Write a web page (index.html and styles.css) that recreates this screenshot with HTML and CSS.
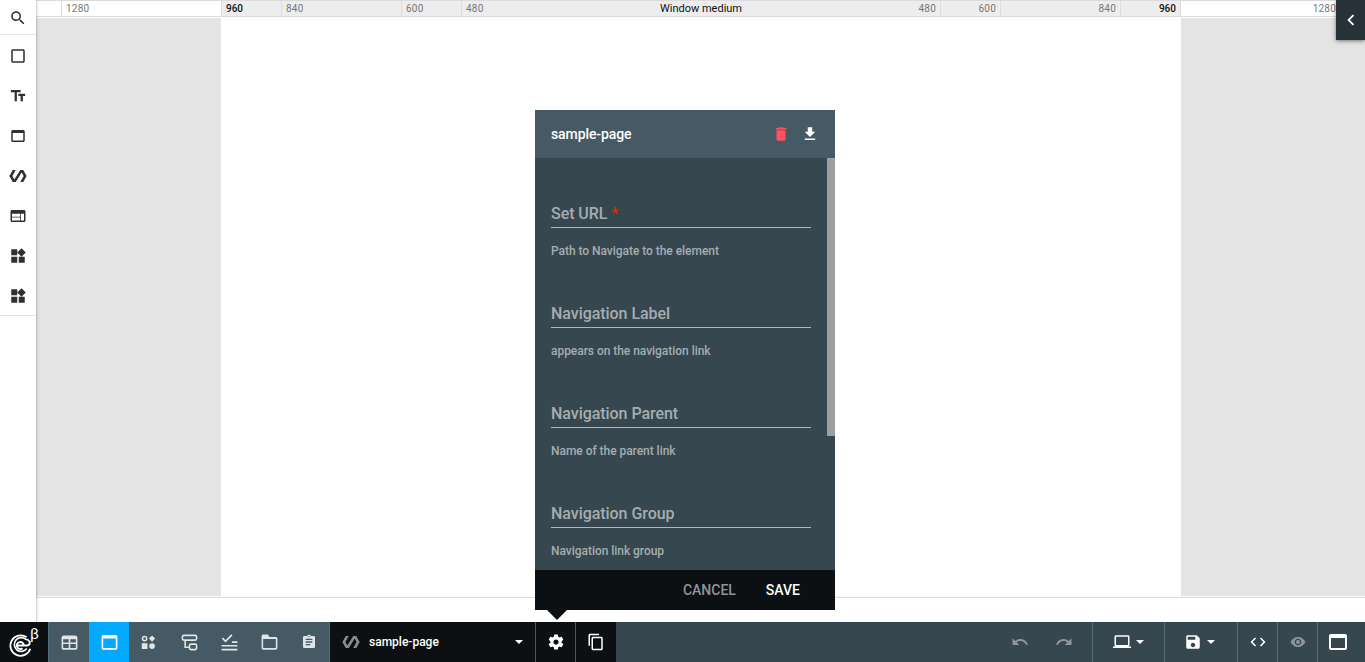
FILE: index.html
```html
<!DOCTYPE html>
<html lang="en">
<head>
<meta charset="utf-8">
<title>sample-page</title>
<link rel="stylesheet" href="styles.css">
</head>
<body>
<div class="app">
  <div class="workspace">
    <aside class="sidebar">
      <button class="tool search"><svg viewBox="0 0 24 24"><path d="M15.5 14h-.79l-.28-.27C15.41 12.59 16 11.11 16 9.5 16 5.91 13.09 3 9.5 3S3 5.91 3 9.5 5.91 16 9.5 16c1.61 0 3.09-.59 4.23-1.57l.27.28v.79l5 4.99L20.49 19l-4.99-5zm-6 0C7.01 14 5 11.99 5 9.5S7.01 5 9.5 5 14 7.01 14 9.5 11.99 14 9.5 14z"/></svg></button>
      <div class="tools">
        <button class="tool"><svg viewBox="0 0 24 24"><path d="M19 5v14H5V5h14m0-2H5c-1.1 0-2 .9-2 2v14c0 1.1.9 2 2 2h14c1.1 0 2-.9 2-2V5c0-1.1-.9-2-2-2z"/></svg></button>
        <button class="tool"><svg viewBox="0 0 24 24"><path d="M2.5 4v3h5v12h3V7h5V4h-13zm19 5h-9v3h3v7h3v-7h3V9z"/></svg></button>
        <button class="tool"><svg viewBox="0 0 24 24"><path d="M19 4H5c-1.11 0-2 .9-2 2v12c0 1.1.89 2 2 2h14c1.1 0 2-.9 2-2V6c0-1.1-.89-2-2-2zm0 14H5V8h14v10z"/></svg></button>
        <button class="tool"><svg viewBox="0 0 24 24"><path d="M19 4h-4L7.11 16.63 4.5 12 9 4H5L.5 12 5 20h4l7.89-12.63L19.5 12 15 20h4l4.5-8z"/></svg></button>
        <button class="tool"><svg viewBox="0 0 24 24"><path d="M20 4H4c-1.1 0-1.99.9-1.99 2L2 18c0 1.1.9 2 2 2h16c1.1 0 2-.9 2-2V6c0-1.1-.9-2-2-2zm-5 14H4v-4h11v4zm0-5H4V9h11v4zm5 5h-4V9h4v9z"/></svg></button>
        <button class="tool"><svg viewBox="0 0 24 24"><path d="M13 13v8h8v-8h-8zM3 21h8v-8H3v8zM3 3v8h8V3H3zm13.66-1.31L11 7.34 16.66 13l5.66-5.66-5.66-5.65z"/></svg></button>
        <button class="tool"><svg viewBox="0 0 24 24"><path d="M13 13v8h8v-8h-8zM3 21h8v-8H3v8zM3 3v8h8V3H3zm13.66-1.31L11 7.34 16.66 13l5.66-5.66-5.66-5.65z"/></svg></button>
      </div>
    </aside>
    <main class="stage">
      <div class="ruler">
        <div class="mark edge"></div>
        <div class="mark left w160">1280</div>
        <div class="mark left w60 inside current">960</div>
        <div class="mark left w120 inside">840</div>
        <div class="mark left w60 inside">600</div>
        <div class="mark middle inside"><span>480</span><span class="window">Window medium</span><span>480</span></div>
        <div class="mark right w60 inside">600</div>
        <div class="mark right w120 inside">840</div>
        <div class="mark right w60 inside current">960</div>
        <div class="mark right w160">1280</div>
      </div>
      <div class="viewport"><div class="canvas"></div></div>
      <button class="drawer"><svg viewBox="0 0 24 24"><path d="M15.41 7.41L14 6l-6 6 6 6 1.41-1.41L10.83 12z"/></svg></button>
    </main>
  </div>

  <footer class="bar">
    <div class="logo"><svg viewBox="0 0 48 40"><g fill="none" stroke="#fff"><path stroke-width="1.8" d="M26.6 15.300A10.200 10.200 0 1 0 30.300 26.800"/><path stroke-width="1.700" d="M30.300 20.300C29 18.500 27.500 17.200 25.500 17.100A6.900 6.900 0 1 0 26.800 26.600"/><path stroke-width="1.900" d="M16.800 23.500H27C29.500 23.400 30 21.500 29.500 20M23.800 23.500A3.500 3.500 0 1 0 22.500 26.200"/></g></svg><span>β</span></div>
    <nav class="tabs">
      <button><svg viewBox="0 0 24 24"><path fill-rule="evenodd" d="M5 3h14a3 3 0 0 1 3 3v13a2 2 0 0 1-2 2H4a2 2 0 0 1-2-2V6a3 3 0 0 1 3-3zM4 8v4h7V8zm9 0v4h7V8zM4 14v5h7v-5zm9 0v5h7v-5z"/></svg></button>
      <button class="active"><svg viewBox="0 0 24 24"><path fill-rule="evenodd" d="M4 2.5h16a2 2 0 0 1 2 2V19a2 2 0 0 1-2 2H4a2 2 0 0 1-2-2V4.500a2 2 0 0 1 2-2zM4 7v12h16V7z"/></svg></button>
      <button class="shapes"><svg viewBox="0 0 24 24"><circle cx="6.500" cy="6.500" r="3" fill="none" stroke="currentColor" stroke-width="2"/><path d="M17 2.200l4.300 4.300-4.300 4.300-4.300-4.300zM2.500 13h8v8h-8z"/><circle cx="17" cy="17" r="4"/></svg></button>
      <button><svg viewBox="0 0 24 24"><g fill="none" stroke="currentColor" stroke-width="2"><rect x="3" y="3" width="18" height="6" rx="2"/><path d="M6.500 9v9h6"/><rect x="12" y="14" width="9" height="7" rx="2"/></g></svg></button>
      <button><svg viewBox="0 0 24 24"><path d="M2 15h20v2H2zm0 5h20v2H2zM15 10.500h7v2h-7z"/><path d="M3 6.500l4 4 8-8" fill="none" stroke="currentColor" stroke-width="2.200"/></svg></button>
      <button><svg viewBox="0 0 24 24"><path d="M20 5h-8l-2-3H4c-1.100 0-2 .9-2 2v15c0 1.100.9 2 2 2h16c1.100 0 2-.9 2-2V7c0-1.100-.9-2-2-2zm0 14H4V7.500h16V19z"/></svg></button>
      <button class="notes"><svg viewBox="0 0 24 24"><path d="M19 3h-4.180C14.400 1.840 13.300 1 12 1s-2.400.84-2.820 2H5c-1.100 0-2 .9-2 2v14c0 1.100.9 2 2 2h14c1.100 0 2-.9 2-2V5c0-1.100-.9-2-2-2zm-7 0c.55 0 1 .45 1 1s-.45 1-1 1-1-.45-1-1 .45-1 1-1zm2 14H7v-2h7v2zm3-4H7v-2h10v2zm0-4H7V7h10v2z"/></svg></button>
    </nav>
    <button class="picker"><svg class="mute" viewBox="0 0 24 24"><path d="M19 4h-4L7.110 16.630 4.500 12 9 4H5L.5 12 5 20h4l7.890-12.630L19.500 12 15 20h4l4.500-8z"/></svg><span>sample-page</span><i class="caret"></i></button>
    <button class="dark"><svg viewBox="0 0 24 24"><path d="M19.430 12.980c.04-.32.070-.64.070-.98s-.030-.66-.070-.98l2.110-1.650c.19-.15.240-.42.120-.64l-2-3.460c-.12-.22-.39-.3-.61-.22l-2.490 1c-.52-.4-1.080-.73-1.690-.98l-.38-2.650C14.460 2.180 14.250 2 14 2h-4c-.25 0-.46.18-.49.42l-.38 2.650c-.61.25-1.170.59-1.690.98l-2.490-1c-.23-.09-.49 0-.61.22l-2 3.460c-.13.22-.07.490.12.640l2.110 1.650c-.04.320-.07.650-.07.980s.030.660.070.980l-2.110 1.650c-.19.150-.24.420-.12.640l2 3.460c.12.220.390.300.610.220l2.490-1c.52.400 1.080.730 1.690.980l.380 2.650c.030.240.240.420.490.420h4c.250 0 .460-.180.490-.420l.380-2.650c.610-.250 1.170-.590 1.690-.980l2.490 1c.230.090.490 0 .610-.220l2-3.460c.120-.220.070-.490-.120-.640l-2.110-1.650zM12 15.500c-1.930 0-3.500-1.570-3.500-3.500s1.570-3.500 3.500-3.500 3.500 1.570 3.500 3.500-1.570 3.500-3.500 3.500z"/></svg></button>
    <button class="dark copy"><svg viewBox="0 0 24 24"><path d="M16 1H4c-1.100 0-2 .9-2 2v14h2V3h12V1zm3 4H8c-1.100 0-2 .9-2 2v14c0 1.100.9 2 2 2h11c1.100 0 2-.9 2-2V7c0-1.100-.9-2-2-2zm0 16H8V7h11v14z"/></svg></button>
    <div class="actions">
      <div class="history">
        <button><svg viewBox="0 0 24 24"><path d="M12.500 8c-2.650 0-5.050.99-6.900 2.600L2 7v9h9l-3.620-3.620c1.390-1.160 3.160-1.880 5.120-1.880 3.540 0 6.550 2.310 7.600 5.500l2.370-.78C21.080 11.030 17.150 8 12.500 8z"/></svg></button>
        <button><svg viewBox="0 0 24 24"><path d="M18.400 10.600C16.550 8.990 14.150 8 11.500 8c-4.650 0-8.580 3.030-9.960 7.220L3.900 16c1.050-3.190 4.050-5.500 7.600-5.500 1.950 0 3.730.72 5.120 1.880L13 16h9V7l-3.600 3.600z"/></svg></button>
      </div>
      <button class="action device"><svg viewBox="0 0 24 24"><path d="M20 18c1.100 0 1.990-.9 1.990-2L22 5c0-1.100-.9-2-2-2H4c-1.100 0-2 .9-2 2v11c0 1.100.9 2 2 2H0v2h24v-2h-4zM4 5h16v11H4V5z"/></svg><i class="caret"></i></button>
      <button class="action save-menu"><svg viewBox="0 0 24 24"><path d="M17 3H5c-1.110 0-2 .9-2 2v14c0 1.100.89 2 2 2h14c1.100 0 2-.9 2-2V7l-4-4zm-5 16c-1.660 0-3-1.340-3-3s1.340-3 3-3 3 1.340 3 3-1.340 3-3 3zm3-10H5V5h10v4z"/></svg><i class="caret"></i></button>
      <button class="action"><svg viewBox="0 0 24 24"><path d="M9.400 16.600L4.800 12l4.600-4.600L8 6l-6 6 6 6 1.400-1.400zm5.200 0l4.600-4.600-4.600-4.600L16 6l6 6-6 6-1.400-1.400z"/></svg></button>
      <button class="action view"><svg viewBox="0 0 24 24"><path d="M12 4.500C7 4.500 2.730 7.610 1 12c1.730 4.390 6 7.500 11 7.500s9.270-3.110 11-7.500c-1.730-4.390-6-7.500-11-7.500zM12 17c-2.760 0-5-2.240-5-5s2.240-5 5-5 5 2.240 5 5-2.240 5-5 5zm0-8c-1.660 0-3 1.340-3 3s1.340 3 3 3 3-1.340 3-3-1.340-3-3-3z"/></svg></button>
      <button class="action last"><svg viewBox="0 0 24 24"><path d="M19 4H5c-1.110 0-2 .9-2 2v12c0 1.100.89 2 2 2h14c1.100 0 2-.9 2-2V6c0-1.100-.89-2-2-2zm0 14H5V8h14v10z"/></svg></button>
    </div>
  </footer>

  <section class="dialog">
    <header class="dialog-head"><h1>sample-page</h1>
      <svg class="trash" viewBox="0 0 24 24"><path d="M6 19c0 1.100.9 2 2 2h8c1.100 0 2-.9 2-2V7H6v12zM19 4h-3.500l-1-1h-5l-1 1H5v2h14V4z"/></svg>
      <svg viewBox="0 0 24 24"><path d="M19 9h-4V3H9v6H5l7 7 7-7zM5 18v2h14v-2H5z"/></svg>
    </header>
    <div class="dialog-body">
      <div class="fields">
        <div class="field"><label>Set URL <b>*</b></label><p>Path to Navigate to the element</p></div>
        <div class="field"><label>Navigation Label</label><p>appears on the navigation link</p></div>
        <div class="field"><label>Navigation Parent</label><p>Name of the parent link</p></div>
        <div class="field"><label>Navigation Group</label><p>Navigation link group</p></div>
      </div>
      <div class="scroll"><div class="thumb"></div></div>
    </div>
    <div class="dialog-foot"><button>CANCEL</button><button class="save">SAVE</button></div>
  </section>
</div>
</body>
</html>
```
FILE: styles.css
```css
* { box-sizing: border-box; }
body { margin: 0; font-family: Roboto, "Liberation Sans", sans-serif; overflow: hidden; }
button { border: 0; padding: 0; margin: 0; background: none; font: inherit; color: inherit; display: flex; align-items: center; justify-content: center; }
svg { display: block; width: 18px; height: 18px; fill: currentColor; flex: none; }
.app { position: relative; width: 1365px; height: 662px; display: flex; flex-direction: column; }
.workspace { flex: 1; display: flex; min-height: 0; }

.sidebar { width: 36px; background: #fff; color: #303030; box-shadow: 0 0 3px rgba(0,0,0,.4); z-index: 1; }
.tool { width: 36px; height: 40px; }
.search { height: 35px; padding-top: 1px; border-bottom: 1px solid #e6e6e6; }
.tools { padding-top: 1px; border-bottom: 1px solid #e6e6e6; }
.tools .tool:last-child { margin-bottom: -1px; }

.stage { position: relative; flex: 1; display: flex; flex-direction: column; overflow: hidden; }
.ruler { display: flex; height: 17px; flex: none; border-top: 1px solid #dcdcdc; border-bottom: 1px solid #dcdcdc; font-size: 10px; line-height: 15px; letter-spacing: .2px; color: #777; }
.mark { flex: none; }
.edge { width: 25px; }
.w60 { width: 60px; }
.w120 { width: 120px; }
.w160 { width: 160px; }
.left { border-left: 1px solid #dcdcdc; padding-left: 4px; }
.right { border-right: 1px solid #dcdcdc; padding-right: 4px; text-align: right; }
.inside { background: #ededed; }
.current { color: #111; font-weight: 500; letter-spacing: 0; }
.middle { width: 480px; display: flex; justify-content: space-between; border: solid #dcdcdc; border-width: 0 1px; padding: 0 4px; }
.window { color: #111; font-size: 11px; letter-spacing: 0; }
.viewport { margin-top: 1px; height: 580px; flex: none; background: #e4e4e4; border-bottom: 1px solid #dcdcdc; box-shadow: inset 0 -1px #fafafa; display: flex; }
.canvas { width: 960px; height: 578px; margin-left: 185px; background: #fff; }
.drawer { position: absolute; right: 0; top: 0; width: 29px; height: 40px; background: #263238; color: #fff; box-shadow: 0 1px 4px rgba(0,0,0,.5); }
.drawer svg { width: 22px; height: 22px; }

.bar { height: 40px; flex: none; display: flex; background: #37474f; color: #fff; position: relative; z-index: 2; }
.logo { position: relative; width: 48px; background: #0c1013; }
.logo svg { width: 48px; height: 40px; }
.logo span { position: absolute; left: 30px; top: 3px; font-size: 15px; line-height: 18px; }
.tabs { display: flex; width: 282px; background: #455a64; border: solid #546e7a; border-width: 0 1px; color: #e0e5e7; }
.tabs button { width: 40px; flex: none; }
.tabs svg { width: 19px; height: 19px; }
.tabs .shapes svg { width: 17px; height: 17px; }
.tabs .shapes { padding-right: 1px; }
.tabs .notes svg { width: 16px; height: 16px; }
.tabs .active { background: #03a9ff; color: #fff; }
.picker { width: 205px; background: #0c1013; padding: 0 12px 0 12px; justify-content: flex-start; }
.picker span { margin-left: 9px; flex: 1; text-align: left; font-weight: 500; font-size: 12px; }
.mute { color: #8b8d8f; }
.caret { border: 4px solid transparent; border-top-color: #fff; border-bottom: 0; }
.dark { width: 40px; background: #0c1013; border-left: 1px solid #455a64; }
.dark.copy { width: 41px; }
.actions { flex: 1; display: flex; justify-content: flex-end; }
.history { display: flex; gap: 26px; padding-right: 19px; color: #8f9699; }
.action { width: 40px; border-left: 1px solid #546e7a; }
.device { width: 72px; gap: 5px; }
.save-menu { width: 73px; gap: 5px; padding-right: 4px; }
.action.view { color: #8f9699; }
.view svg { width: 16px; height: 16px; }
.action.last { width: 48px; padding-right: 7px; }
.last svg { width: 24px; height: 24px; }

.dialog { position: absolute; z-index: 3; left: 535px; top: 110px; width: 300px; height: 500px; display: flex; flex-direction: column; }
.dialog::after { content: ""; position: absolute; left: 12px; top: 100%; border: 10px solid transparent; border-top-color: #0c1013; border-bottom: 0; }
.dialog-head { height: 48px; background: #455a64; color: #fff; display: flex; align-items: center; padding: 0 16px; gap: 11px; }
.dialog-head h1 { margin: 0; flex: 1; font-size: 14px; letter-spacing: -.1px; font-weight: 500; }
.trash { color: #ff5060; }
.dialog-body { flex: 1; background: #37474f; display: flex; min-height: 0; }
.fields { flex: 1; padding: 44px 16px 0; overflow: hidden; }
.field { height: 100px; color: #a5adb1; }
.field label { display: block; height: 26px; line-height: 24px; font-size: 16px; letter-spacing: -.05px; font-weight: 500; border-bottom: 1px solid #b0b6b9; }
.field b { color: #dd2c00; font-weight: 500; }
.field p { margin: 15px 0 0; font-size: 12px; letter-spacing: -.04px; line-height: 16px; font-weight: 500; }
.scroll { width: 8px; }
.thumb { height: 278px; background: #9e9e9e; }
.dialog-foot { height: 40px; background: #0c1013; display: flex; justify-content: flex-end; gap: 30px; padding-right: 35px; color: #929496; font-size: 14px; font-weight: 500; }
.dialog-foot .save { color: #fff; }
```
